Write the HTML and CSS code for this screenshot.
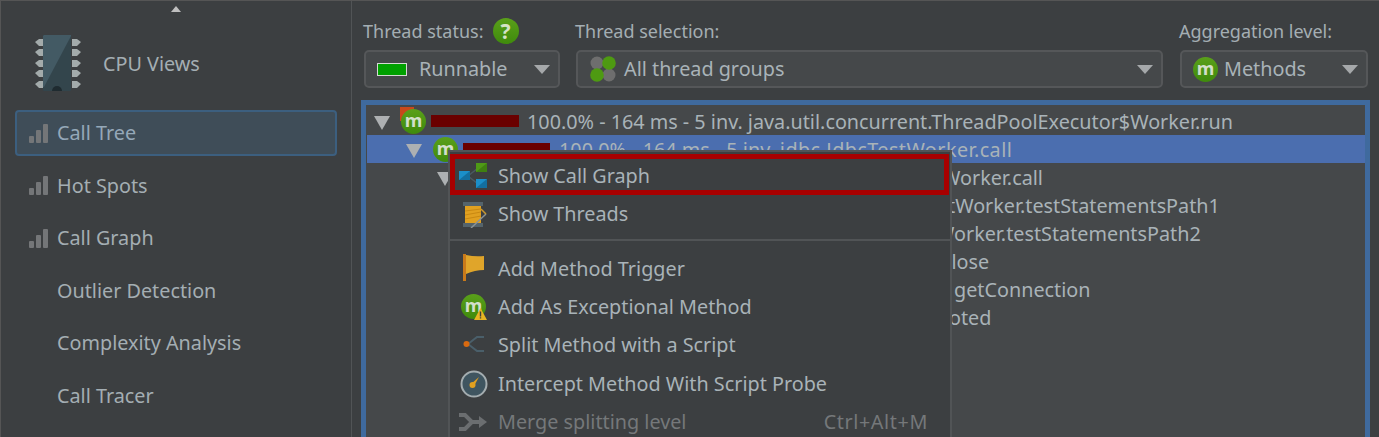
FILE: index.html
```html
<!DOCTYPE html>
<html lang="en">
<head>
<meta charset="utf-8">
<title>CPU Views</title>
<link rel="stylesheet" href="styles.css">
</head>
<body>
<div class="app">
  <aside class="side">
    <div class="scroll-up"></div>
    <div class="side-head">
      <svg class="chip" width="48" height="58" viewBox="0 0 48 58">
        <g fill="#a3abab">
          <path d="M1 7l4-3h5v7H5zM1 17l4-3h5v7H5zM1 28l4-3h5v7H5zM1 38l4-3h5v7H5zM1 49l4-3h5v7H5z"/>
          <path d="M47 7l-4-3h-5v7h5zM47 17l-4-3h-5v7h5zM47 28l-4-3h-5v7h5zM47 38l-4-3h-5v7h5zM47 49l-4-3h-5v7h5z"/>
        </g>
        <rect x="9" y="0" width="28" height="56" rx="1" fill="#33454c"/>
        <path d="M10 0h27v1L10 52H9V1z" fill="#435a64"/>
        <path d="M18 56a5 5 0 0 1 10 0z" fill="#1f2b30"/>
      </svg>
      <span>CPU Views</span>
    </div>
    <nav class="nav">
      <a class="nav-item active"><svg class="bars" width="19" height="19" viewBox="0 0 19 19"><rect y="12" width="5" height="7" rx="1"/><rect x="7" y="6" width="5" height="13" rx="1"/><rect x="14" y="0" width="5" height="19" rx="1"/></svg>Call Tree</a>
      <a class="nav-item"><svg class="bars" width="19" height="19" viewBox="0 0 19 19"><rect y="12" width="5" height="7" rx="1"/><rect x="7" y="6" width="5" height="13" rx="1"/><rect x="14" y="0" width="5" height="19" rx="1"/></svg>Hot Spots</a>
      <a class="nav-item"><svg class="bars" width="19" height="19" viewBox="0 0 19 19"><rect y="12" width="5" height="7" rx="1"/><rect x="7" y="6" width="5" height="13" rx="1"/><rect x="14" y="0" width="5" height="19" rx="1"/></svg>Call Graph</a>
      <a class="nav-item plain">Outlier Detection</a>
      <a class="nav-item plain">Complexity Analysis</a>
      <a class="nav-item plain">Call Tracer</a>
    </nav>
  </aside>
  <main class="main">
    <div class="filters">
      <div class="field f-status">
        <div class="label">Thread status:<span class="help">?</span></div>
        <div class="combo"><span class="swatch"></span><span class="combo-text">Runnable</span><span class="arrow"></span></div>
      </div>
      <div class="field f-select">
        <div class="label">Thread selection:</div>
        <div class="combo combo-groups">
          <svg class="groups" width="26" height="26" viewBox="0 0 26 26"><circle cx="7" cy="7" r="6.5" fill="#6e6e6e"/><circle cx="19" cy="19" r="6.5" fill="#6e6e6e"/><circle cx="19" cy="7" r="6.8" fill="#4e9a12"/><circle cx="7" cy="19" r="6.8" fill="#4e9a12"/></svg>
          <span class="combo-text">All thread groups</span><span class="arrow"></span>
        </div>
      </div>
      <div class="field f-agg">
        <div class="label">Aggregation level:</div>
        <div class="combo combo-agg"><span class="m-badge">m</span><span class="combo-text">Methods</span><span class="arrow"></span></div>
      </div>
    </div>
    <div class="tree">
      <div class="row r1"><span class="tri"></span><span class="flag"></span><span class="m-badge">m</span><span class="bar b1"></span><span class="t">100.0% - 164 ms - 5 inv. java.util.concurrent.ThreadPoolExecutor$Worker.run</span></div>
      <div class="row r2 selected"><span class="tri"></span><span class="m-badge">m</span><span class="bar b2"></span><span class="t">100.0% - 164 ms - 5 inv. <span class="cls">jdbc.JdbcTestWorker.call</span></span></div>
      <div class="row r3"><span class="tri"></span><span class="t f3">Worker.call</span></div>
      <div class="row"><span class="t f4">tWorker.testStatementsPath1</span></div>
      <div class="row"><span class="t f5">Worker.testStatementsPath2</span></div>
      <div class="row"><span class="t f6">close</span></div>
      <div class="row"><span class="t f7">getConnection</span></div>
      <div class="row"><span class="t f8">oted</span></div>
    </div>
    <div class="menu">
      <div class="menu-item hot">
        <svg class="mi i-graph" width="28" height="25" viewBox="0 0 28 25"><path d="M9 13L19 5M9 13l10 8" stroke="#4a5a62" stroke-width="1.500" fill="none"/><rect x="0" y="8" width="11" height="9" fill="#1b8fc9"/><path d="M11 8v9H0z" fill="#136f9f"/><rect x="17" y="0" width="11" height="9" fill="#4f9a16"/><path d="M28 0v9H17z" fill="#3f8010"/><rect x="17" y="16" width="11" height="9" fill="#1b8fc9"/><path d="M28 16v9H17z" fill="#136f9f"/></svg>
        <span class="t">Show Call Graph</span>
      </div>
      <div class="menu-item">
        <svg class="mi i-spool" width="25" height="26" viewBox="0 0 25 26"><rect x="0" y="0" width="20" height="4" fill="#55646c"/><rect x="0" y="21" width="20" height="4" fill="#55646c"/><rect x="2" y="4" width="16" height="17" fill="#e0a020"/><path d="M2 9l16-2M2 13l16-3M2 17l16-3" stroke="#c88812" stroke-width="1"/><path d="M8 26L23 12" stroke="#8a9296" stroke-width="1.500"/><path d="M18 7l5 5" stroke="#c9982f" stroke-width="1.500"/></svg>
        <span>Show Threads</span>
      </div>
      <div class="sep"></div>
      <div class="menu-item">
        <svg class="mi i-flag" width="22" height="28" viewBox="0 0 22 28"><path d="M3 1q9 2 18 1v14q-9 0-18 4z" fill="#e0a52a"/><rect x="0" y="0" width="3" height="27" fill="#c97a1a"/></svg>
        <span>Add Method Trigger</span>
      </div>
      <div class="menu-item">
        <span class="m-badge small">m</span>
        <svg class="warn" width="13" height="12" viewBox="0 0 13 12"><path d="M6.500 0L13 12H0z" fill="#e6b422"/><path d="M5.800 3.500h1.400v5H5.800zM5.800 9.200h1.400v1.400H5.800z" fill="#3c3f41"/></svg>
        <span>Add As Exceptional Method</span>
      </div>
      <div class="menu-item">
        <svg class="mi i-split" width="24" height="20" viewBox="0 0 24 20"><path d="M5 10L14 3h7M5 10l9 7h7" stroke="#4a5f6a" stroke-width="2" fill="none"/><circle cx="3.500" cy="10" r="3" fill="#d96a10"/></svg>
        <span>Split Method with a Script</span>
      </div>
      <div class="menu-item">
        <svg class="mi i-probe" width="28" height="28" viewBox="0 0 28 28"><circle cx="14" cy="14" r="12.500" fill="#3f5560" stroke="#a4adb0" stroke-width="2"/><path d="M19 7l-5 9-3-2z" fill="#e0a020"/><circle cx="12.500" cy="15" r="3" fill="#e0a020"/></svg>
        <span>Intercept Method With Script Probe</span>
      </div>
      <div class="menu-item disabled">
        <svg class="mi i-merge" width="28" height="20" viewBox="0 0 28 20"><path d="M0 3h6l7 7-7 7H0" fill="none" stroke="#6b6e70" stroke-width="4"/><path d="M12 10h10" stroke="#6b6e70" stroke-width="4"/><path d="M20 4l8 6-8 6z" fill="#6b6e70"/></svg>
        <span>Merge splitting level</span><span class="key">Ctrl+Alt+M</span>
      </div>
    </div>
  </main>
</div>
</body>
</html>
```
FILE: styles.css
```css
* { box-sizing: border-box; }
html, body { margin: 0; height: 437px; overflow: hidden; }
body { background: #3c3f41; color: #a9b3b8; font: 19.800px/28px "Noto Sans", sans-serif; }
.app { display: flex; height: 437px; border-top: 1px solid #555; border-left: 1px solid #555; }
.side { width: 351px; flex: none; border-right: 1px solid #515456; height: 436px; }
.scroll-up { width: 0; height: 0; margin: 5px 0 0 170px; border: 5px solid transparent; border-top: 0; border-bottom: 6px solid #bfbfbf; }
.side-head { display: flex; align-items: center; padding: 21px 0 0 33px; height: 83px; }
.chip { flex: none; }
.side-head span { margin-left: 21px; color: #a4aeb3; }
.nav { margin: 15px 0 0 14px; width: 322px; }
.nav-item { display: flex; align-items: center; height: 46px; margin-bottom: 6.500px; padding: 0 0 0 13px; border: 1px solid transparent; color: #a4aeb3; }
.nav-item.active { background: #3f4d58; border: 2px solid #3c5f7f; border-radius: 4px; padding-left: 12px; color: #95a8b8; }
.nav-item.plain { padding-left: 41px; }
.bars { fill: #747678; margin-right: 9px; flex: none; }
.main { flex: 1; position: relative; padding: 0 9px; min-width: 0; }
.filters { display: flex; height: 99px; padding-left: 3px; }
.field { flex: none; }
.f-status { width: 212px; }
.f-select { width: 604px; }
.f-agg { width: 188px; }
.label { display: flex; align-items: center; height: 30px; margin: 15px 0 0 -1px; color: #a4aeb3; font-size: 18px; }
.help { width: 26px; height: 26px; border-radius: 50%; background: linear-gradient(#5aa01a, #3f8a0c); color: #d5e3c5; margin-left: 9px; text-align: center; font: bold 21px/26px "Noto Sans", sans-serif; }
.combo { display: flex; align-items: center; height: 38px; margin-top: 4px; border: 2px solid #555759; border-radius: 5px; background: #45484a; position: relative; }
.f-status .combo { width: 196px; padding-left: 11px; }
.f-select .combo { width: 587px; padding-left: 12px; }
.f-agg .combo { width: 188px; padding-left: 11px; }
.swatch { width: 30px; height: 13px; background: #00a000; border: 1px solid #d4d8d4; flex: none; }
.f-status .combo-text { margin-left: 12px; }
.f-select .combo-text { margin-left: 8px; }
.f-agg .combo-text { margin-left: 6px; }
.arrow { position: absolute; right: 8px; top: 13px; border-left: 8px solid transparent; border-right: 8px solid transparent; border-top: 9px solid #a5a8aa; }
.m-badge { display: inline-block; flex: none; width: 25px; height: 25px; border-radius: 50%; background: linear-gradient(#5aa01a, #3f8a0c); color: #d3dfca; text-align: center; font: bold 18px/22px "Noto Sans", sans-serif; position: relative; }
.tree { height: 337px; border: 5px solid #3f6a9e; border-bottom: 0; background: #45484a; padding: 2px 0 0 1px; color: #a9b3b8; }
.row { display: flex; align-items: center; height: 28px; white-space: nowrap; }
.t { padding-top: 2px; }
.tri { flex: none; width: 0; height: 0; border-left: 8px solid transparent; border-right: 8px solid transparent; border-top: 14px solid #adb0b2; margin-top: 3px; }
.r1 { padding-left: 7px; }
.r2 { padding-left: 39px; }
.r3 { padding-left: 70px; }
.selected { background: #4b6eaf; }
.flag { flex: none; width: 14px; height: 14px; background: #c8481c; margin: -15px -13px 0 10px; }
.r2 .m-badge { margin-left: 11px; }
.bar { flex: none; height: 12px; background: #6a0000; margin: 0 8px 0 5px; }
.b1 { width: 88px; }
.b2 { width: 87px; }
.r2 .bar { margin-left: 5px; margin-right: 9px; }
.cls { letter-spacing: 0.440px; }
.f3 { margin-left: 489px; }
.f4 { margin-left: 581px; }
.f5 { margin-left: 569px; }
.f6 { margin-left: 575px; }
.f7 { margin-left: 587px; }
.f8 { margin-left: 582px; }
.menu { position: absolute; left: 96px; top: 149px; width: 504px; height: 300px; background: #3c3f41; border: 2px solid #515456; padding-top: 2px; color: #a9b3b8; }
.menu-item { display: flex; align-items: center; height: 38.400px; position: relative; padding-left: 48px; }
.menu-item .mi { position: absolute; }
.menu-item.hot { border: 5px solid #a80000; height: 41px; padding-left: 43px; margin: 0 1px 0 0; }
.i-graph { left: 4px; top: 4px; }
.i-spool { left: 13px; top: 7px; }
.i-flag { left: 13px; top: 5px; }
.i-split { left: 13px; top: 8px; }
.i-probe { left: 10px; top: 5px; }
.i-merge { left: 9px; top: 9px; }
.sep { height: 2px; margin: 6px 0 8px; background: #515456; }
.m-badge.small { position: absolute; left: 11px; top: 6px; }
.warn { position: absolute; left: 24px; top: 20px; }
.disabled { color: #75787a; }
.key { position: absolute; right: 22px; letter-spacing: 0.600px; }
```
